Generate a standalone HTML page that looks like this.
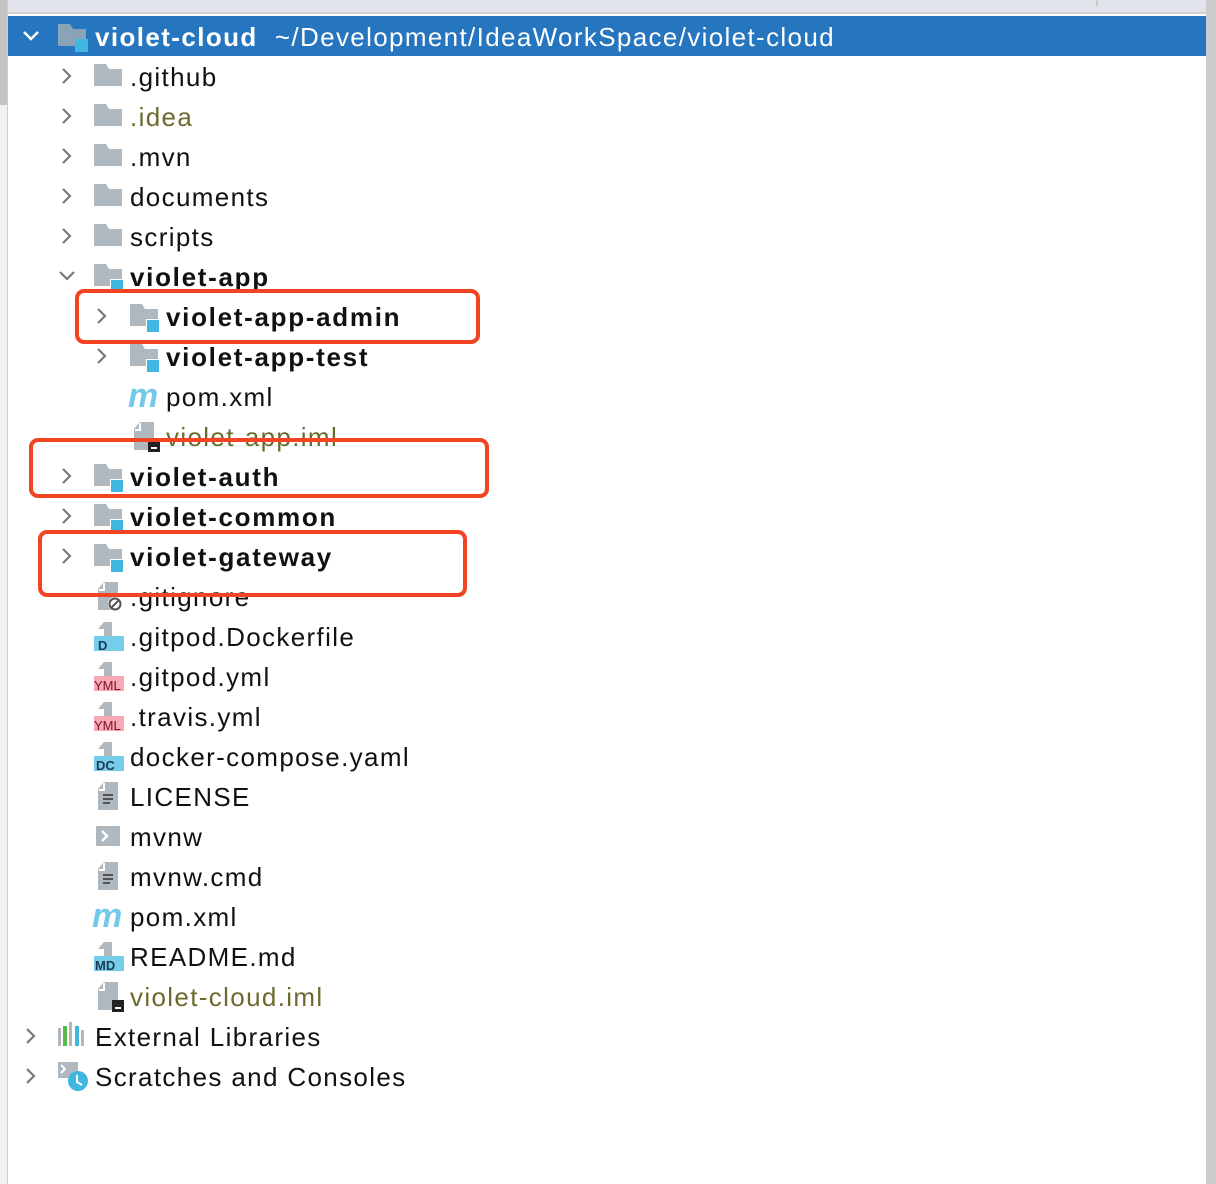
<!DOCTYPE html>
<html><head><meta charset="utf-8"><style>
html,body{margin:0;padding:0}
body{width:1216px;height:1184px;position:relative;overflow:hidden;background:#fff;font-family:"Liberation Sans",sans-serif}
.r{position:absolute;height:40px;line-height:40px;font-size:26px;letter-spacing:1.35px;color:#111;white-space:nowrap}
.b{font-weight:bold;letter-spacing:1.7px}
.o{color:#6d6a2e}
svg{position:absolute}
.box{position:absolute;border:4px solid #f24422;border-radius:9px;box-sizing:border-box}
</style></head><body>
<div style="position:absolute;left:0;top:0;width:1216px;height:12px;background:#e2e4ec"></div>
<div style="position:absolute;left:0;top:12px;width:1216px;height:2px;background:#d0d0d0"></div>
<div style="position:absolute;left:1096px;top:0;width:2px;height:6px;background:#ccc"></div>
<div style="position:absolute;left:0;top:0;width:7px;height:1184px;background:#f2f2f2"></div>
<div style="position:absolute;left:0;top:0;width:7px;height:105px;background:#c4c4c4"></div>
<div style="position:absolute;left:7px;top:0;width:1px;height:1184px;background:#cfcfcf"></div>
<div style="position:absolute;left:1206px;top:0;width:10px;height:1184px;background:#cdcdcd"></div>
<div style="position:absolute;left:8px;top:16px;width:1198px;height:40px;background:#2675bf"></div>

<svg width="1216" height="1184" style="left:0;top:0">
<defs>
<g id="chev"><path d="M-4 -7 L3 0 L-4 7" fill="none" stroke="#7a7a7a" stroke-width="2.2"/></g>
<g id="chevd"><path d="M-7 -4 L0 3 L7 -4" fill="none" stroke="#7a7a7a" stroke-width="2.2"/></g>
<g id="fold"><path d="M0 0 H12 L15 5 H28 V22 H0Z" fill="#afb8bf"/></g>
<g id="mod"><path d="M0 0 H12 L15 5 H28 V22 H0Z" fill="#afb8bf"/><rect x="16" y="15" width="13" height="13" fill="#fff"/><rect x="17" y="16" width="12" height="12" fill="#40b6e0"/></g>
<g id="pg"><path d="M6 0 H20 V28 H0 V7Z" fill="#afb8bf"/><path d="M0 7 L6 0 V7Z" fill="#afb8bf"/><path d="M6 1 V8 H1" fill="none" stroke="#fff" stroke-width="2"/></g>
</defs>
<path d="M24 32 L31 39 L38 32" fill="none" stroke="#fff" stroke-width="2.5"/>
<use href="#chev" x="67" y="76"/><use href="#chev" x="67" y="116"/><use href="#chev" x="67" y="156"/><use href="#chev" x="67" y="196"/><use href="#chev" x="67" y="236"/>
<use href="#chevd" x="67" y="276"/>
<use href="#chev" x="102" y="316"/><use href="#chev" x="102" y="356"/>
<use href="#chev" x="67" y="476"/><use href="#chev" x="67" y="516"/><use href="#chev" x="67" y="556"/>
<use href="#chev" x="31" y="1036"/><use href="#chev" x="31" y="1076"/>
<path d="M58 24 H70 L73 29 H86 V46 H58Z" fill="#8aa3b8"/><rect x="75" y="39" width="13" height="13" fill="#41b6e2"/>
<use href="#fold" x="94" y="64"/><use href="#fold" x="94" y="104"/><use href="#fold" x="94" y="144"/><use href="#fold" x="94" y="184"/><use href="#fold" x="94" y="224"/>
<use href="#mod" x="94" y="264"/>
<use href="#mod" x="130" y="304"/><use href="#mod" x="130" y="344"/>
<use href="#mod" x="94" y="464"/><use href="#mod" x="94" y="504"/><use href="#mod" x="94" y="544"/>
<text x="128" y="407" font-family="Liberation Sans" font-weight="bold" font-style="italic" font-size="34" fill="#74c8ea">m</text>
<text x="92" y="927" font-family="Liberation Sans" font-weight="bold" font-style="italic" font-size="34" fill="#74c8ea">m</text>
<use href="#pg" x="134" y="422"/><rect x="148" y="440" width="12" height="12" fill="#222"/><rect x="151" y="447" width="6" height="2" fill="#fff"/>
<use href="#pg" x="98" y="982"/><rect x="112" y="1000" width="12" height="12" fill="#222"/><rect x="115" y="1007" width="6" height="2" fill="#fff"/>
<use href="#pg" x="98" y="582"/><circle cx="115" cy="604" r="7" fill="#fff"/><circle cx="115" cy="604" r="5.5" fill="none" stroke="#555" stroke-width="2"/><path d="M111 608 L119 600" stroke="#555" stroke-width="2"/>
<path d="M104 622 H112 V636 H104Z M104 622 L98 629 H104Z" fill="#afb8bf"/><rect x="94" y="636" width="30" height="15" fill="#76cdea"/><text x="98" y="650" font-size="13" font-weight="bold" fill="#1d3b55" font-family="Liberation Sans">D</text>
<path d="M104 662 H112 V676 H104Z M104 662 L98 669 H104Z" fill="#afb8bf"/><rect x="94" y="676" width="30" height="15" fill="#f7aab6"/><text x="94" y="690" font-size="13" fill="#7a1020" font-family="Liberation Sans">YML</text>
<path d="M104 702 H112 V716 H104Z M104 702 L98 709 H104Z" fill="#afb8bf"/><rect x="94" y="716" width="30" height="15" fill="#f7aab6"/><text x="94" y="730" font-size="13" fill="#7a1020" font-family="Liberation Sans">YML</text>
<path d="M104 742 H112 V756 H104Z M104 742 L98 749 H104Z" fill="#afb8bf"/><rect x="94" y="756" width="30" height="15" fill="#76cdea"/><text x="96" y="770" font-size="13" font-weight="bold" fill="#1d3b55" font-family="Liberation Sans">DC</text>
<use href="#pg" x="98" y="782"/><path d="M103 795 H113 M103 799 H113 M103 803 H110" stroke="#333" stroke-width="1.5"/>
<rect x="96" y="826" width="24" height="20" fill="#afb8bf"/><path d="M102 831 L107 836 L102 841" fill="none" stroke="#fff" stroke-width="2.5"/>
<use href="#pg" x="98" y="862"/><path d="M103 875 H113 M103 879 H113 M103 883 H110" stroke="#333" stroke-width="1.5"/>
<path d="M104 942 H112 V956 H104Z M104 942 L98 949 H104Z" fill="#afb8bf"/><rect x="94" y="956" width="30" height="15" fill="#76cdea"/><text x="95" y="970" font-size="13" font-weight="bold" fill="#1d3b55" font-family="Liberation Sans">MD</text>
<rect x="58" y="1028" width="3" height="18" fill="#afb8bf"/><rect x="63" y="1026" width="4" height="20" fill="#5db84a"/><rect x="69" y="1022" width="3" height="24" fill="#afb8bf"/><rect x="75" y="1026" width="4" height="20" fill="#40b6e0"/><rect x="81" y="1030" width="3" height="16" fill="#afb8bf"/>
<rect x="58" y="1062" width="20" height="16" fill="#afb8bf"/><path d="M61 1065 L65 1069 L61 1073" fill="none" stroke="#fff" stroke-width="2"/><circle cx="78" cy="1081" r="10" fill="#40b6e0"/><path d="M77 1075 V1082 L82 1085" fill="none" stroke="#fff" stroke-width="2"/>
</svg>

<div class="r b" style="left:95px;top:17px;color:#fff;letter-spacing:1.4px">violet-cloud <span style="font-weight:normal;letter-spacing:1.35px">&nbsp;~/Development/IdeaWorkSpace/violet-cloud</span></div>
<div class="r" style="left:130px;top:57px">.github</div>
<div class="r o" style="left:130px;top:97px">.idea</div>
<div class="r" style="left:130px;top:137px">.mvn</div>
<div class="r" style="left:130px;top:177px">documents</div>
<div class="r" style="left:130px;top:217px">scripts</div>
<div class="r b" style="left:130px;top:257px">violet-app</div>
<div class="r b" style="left:166px;top:297px">violet-app-admin</div>
<div class="r b" style="left:166px;top:337px">violet-app-test</div>
<div class="r" style="left:166px;top:377px">pom.xml</div>
<div class="r o" style="left:166px;top:417px">violet-app.iml</div>
<div class="r b" style="left:130px;top:457px">violet-auth</div>
<div class="r b" style="left:130px;top:497px">violet-common</div>
<div class="r b" style="left:130px;top:537px">violet-gateway</div>
<div class="r" style="left:130px;top:577px">.gitignore</div>
<div class="r" style="left:130px;top:617px">.gitpod.Dockerfile</div>
<div class="r" style="left:130px;top:657px">.gitpod.yml</div>
<div class="r" style="left:130px;top:697px">.travis.yml</div>
<div class="r" style="left:130px;top:737px">docker-compose.yaml</div>
<div class="r" style="left:130px;top:777px">LICENSE</div>
<div class="r" style="left:130px;top:817px">mvnw</div>
<div class="r" style="left:130px;top:857px">mvnw.cmd</div>
<div class="r" style="left:130px;top:897px">pom.xml</div>
<div class="r" style="left:130px;top:937px">README.md</div>
<div class="r o" style="left:130px;top:977px">violet-cloud.iml</div>
<div class="r" style="left:95px;top:1017px">External Libraries</div>
<div class="r" style="left:95px;top:1057px">Scratches and Consoles</div>

<div class="box" style="left:75px;top:289px;width:405px;height:55px"></div>
<div class="box" style="left:29px;top:438px;width:460px;height:60px"></div>
<div class="box" style="left:38px;top:530px;width:429px;height:67px"></div>
</body></html>
